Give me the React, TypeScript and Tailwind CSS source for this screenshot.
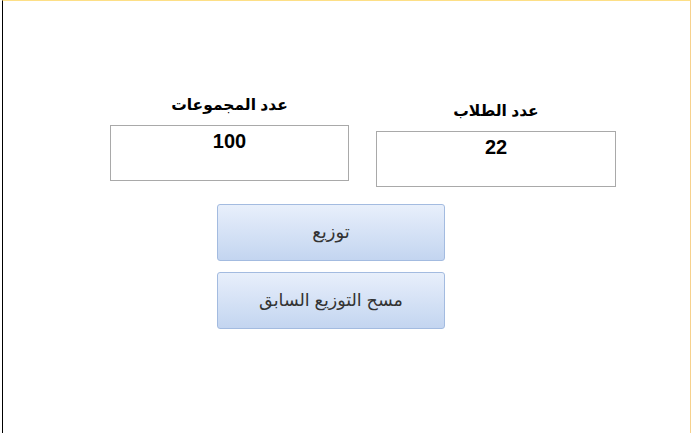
import React from "react";

export default function App() {
  return (
    <div className="w-[691px] h-[433px] bg-white overflow-hidden" style={{ fontFamily: '"Liberation Sans", "DejaVu Sans", Arial, sans-serif' }}>
      <div className="ml-[2px] h-[433px] w-[689px] border-l border-l-black border-t border-t-[#fddf86] border-r border-r-[#f7d28e]">
        <div className="flex items-start pl-[107px] pt-[94px]">
          <div className="flex flex-col items-center w-[239px]">
            <div dir="rtl" className="text-[15.5px] font-bold text-black leading-[20px] h-[30px]">عدد المجموعات</div>
            <div className="w-[239px] h-[56px] border border-[#a9a9a9] flex justify-center">
              <span className="text-[20px] font-bold text-black leading-[26px] mt-[2px]">100</span>
            </div>
          </div>
          <div className="flex flex-col items-center w-[240px] ml-[27px] mt-[6px]">
            <div dir="rtl" className="text-[15.5px] font-bold text-black leading-[20px] h-[30px]">عدد الطلاب</div>
            <div className="w-[240px] h-[56px] border border-[#a9a9a9] flex justify-center">
              <span className="text-[20px] font-bold text-black leading-[26px] mt-[2px]">22</span>
            </div>
          </div>
        </div>
        <div className="flex flex-col gap-[11px] ml-[214px] mt-[17px] w-[228px]">
          <button dir="rtl" className="h-[57px] w-[228px] rounded-[3px] border border-[#a3bbe0] bg-gradient-to-b from-[#e8effb] to-[#c3d5f0] text-[18px] text-[#333]">توزيع</button>
          <button dir="rtl" className="h-[57px] w-[228px] rounded-[3px] border border-[#a3bbe0] bg-gradient-to-b from-[#e8effb] to-[#c3d5f0] text-[17.5px] text-[#333]">مسح التوزيع السابق</button>
        </div>
      </div>
    </div>
  );
}
